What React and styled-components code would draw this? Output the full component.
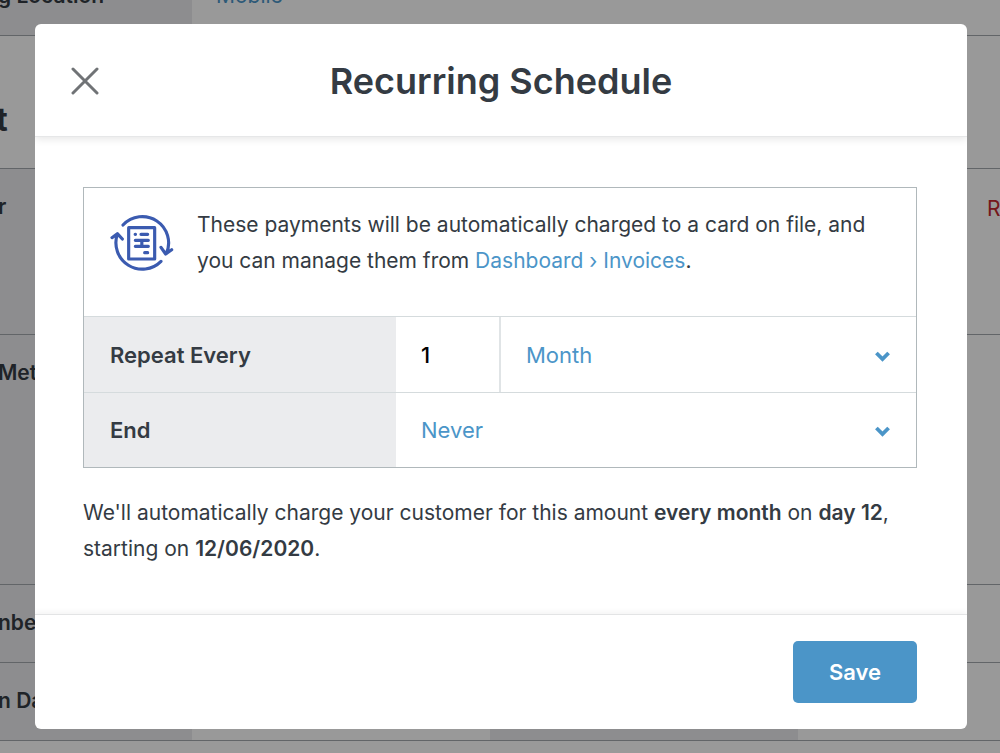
import React from 'react';
import styled, { createGlobalStyle } from 'styled-components';

const GlobalStyle = createGlobalStyle`
* { box-sizing: border-box; }
body {
    margin: 0;
    overflow: hidden;
    background: #fff;
    color: #343b43;
    font-family: Inter, "Liberation Sans", sans-serif;
    font-size: 22px;
}
`;

// ---------------- transaction page under the dialog ----------------

const Page = styled.main`
height: 100vh;
overflow: hidden;
font-size: 21px;
`;

const Table = styled.div`
margin-top: -42px;
`;

const Row = styled.div`
display: flex;
height: ${p => p.$height || 78}px;
border-bottom: 1px solid #a4a9ad;
line-height: 30px;
white-space: nowrap;
`;

const RowLabel = styled.div`
flex: none;
width: ${p => p.$wide ? 308 : 192}px;
padding: 23px 0;
background: #ebecee;
font-weight: 600;
text-indent: -2px;
overflow: hidden;
`;

const RowValue = styled.div`
flex: ${p => p.$fixed ? '0 0 298px' : 1};
padding: 23px 24px;
color: #4b95c8;
`;

const RowAction = styled.div`
width: 13px;
padding: 25px 0;
color: #c3282d;
`;

const SectionTitle = styled.h2`
margin: 0;
align-self: center;
padding-top: 36px;
font-size: 32px;
font-weight: 700;
text-indent: -4px;
`;

// ---------------- dialog ----------------

const Backdrop = styled.div`
position: fixed;
inset: 0;
display: flex;
align-items: flex-start;
padding: 24px 33px 24px 35px;
background: rgba(0, 0, 0, .4);
`;

const Dialog = styled.section`
flex: 1;
overflow: hidden;
border-radius: 6px;
background: #fff;
`;

const Header = styled.header`
display: grid;
grid-template-columns: 1fr auto 1fr;
align-items: center;
height: 113px;
padding: 1px 36px 0;
border-bottom: 1px solid #e6e7e8;
box-shadow: 0 2px 8px rgba(0, 0, 0, .1);
`;

const Title = styled.h1`
margin: 0;
font-size: 36px;
line-height: 44px;
font-weight: 600;
`;

const CloseButton = styled.button`
justify-self: start;
display: flex;
padding: 0;
border: 0;
background: none;
cursor: pointer;
`;

const Body = styled.div`
padding: 50px 50px 47px 48px;
`;

const Panel = styled.div`
border: 1px solid #b0b8bb;
`;

const Info = styled.div`
display: flex;
gap: 23px;
padding: 19px 26px 37px;
svg {
    flex: none;
    margin-top: 6px;
}
`;

const Text = styled.p`
margin: 0;
font-size: 21px;
line-height: 36px;
`;

const Summary = styled(Text)`
margin-top: 27px;
`;

const Strong = styled.strong`
font-weight: 600;
`;

const Link = styled.a`
color: #4b95c8;
text-decoration: none;
`;

const Field = styled.div`
display: flex;
height: ${p => p.$tall ? 76 : 75}px;
border-top: 1px solid #d5dbdd;
`;

const FieldLabel = styled.label`
flex: none;
display: flex;
align-items: center;
width: 312px;
padding-left: 26px;
background: #ebecee;
font-weight: 600;
`;

const Quantity = styled.input`
flex: none;
width: 105px;
padding: 0 25px;
border: 0;
border-right: 2px solid #e0e4e6;
border-radius: 0;
background: none;
color: #000;
font: inherit;
font-weight: 500;
outline: none;
`;

const SelectWrap = styled.div`
flex: 1;
display: grid;
align-items: center;
> * { grid-area: 1 / 1; }
svg {
    justify-self: end;
    margin-right: 26px;
    margin-top: 3px;
    pointer-events: none;
}
`;

const Select = styled.select`
appearance: none;
width: 100%;
height: 100%;
padding: 0 60px 0 25px;
border: 0;
background: none;
color: #4b95c8;
font: inherit;
outline: none;
cursor: pointer;
`;

const Footer = styled.footer`
display: flex;
justify-content: flex-end;
padding: 26px 50px;
border-top: 1px solid #e3e4e5;
box-shadow: 0 -2px 6px rgba(0, 0, 0, .05);
`;

const SaveButton = styled.button`
width: 124px;
height: 62px;
border: 0;
border-radius: 5px;
background: #4b95c8;
color: #fff;
font: inherit;
font-weight: 600;
cursor: pointer;
`;

const CloseIcon = () => (
    <svg width="28" height="28" viewBox="0 0 28 28" fill="none" stroke="#707376" strokeWidth="3" strokeLinecap="round">
        <path d="M2 2l24 24M26 2L2 26" />
    </svg>
);

const ChevronIcon = () => (
    <svg width="15" height="11" viewBox="0 0 15 11" fill="none" stroke="#4b95c8" strokeWidth="3.8">
        <path d="M1.4 2l6.1 6.1L13.6 2" />
    </svg>
);

const RecurringIcon = () => (
    <svg width="64" height="60" viewBox="60 54 192 180" fill="none" stroke="#3b5bb0" strokeWidth="9.5"
        strokeLinecap="round" strokeLinejoin="round">
        <path d="M99 90a79 79 0 0 1 130 86M213 157l14 20 18-13" />
        <path d="M213 199A79 79 0 0 1 82 118M66 128l16-12 15 16" />
        <path d="M116 98h78v94h-78z" />
        <path d="M135.5 118h1M153 118h20M136 136h39M155.5 136v18M136 154h39M164 173h9" />
    </svg>
);

class RecurringSchedule extends React.Component {
    constructor() {
        super();
        this.state = {
            count: '1',
            unit: 'Month',
            end: 'Never'
        }
    }

    render() {
        return (
            <Dialog role="dialog" aria-labelledby="title">
                <Header>
                    <CloseButton aria-label="Close"><CloseIcon /></CloseButton>
                    <Title id="title">Recurring Schedule</Title>
                </Header>
                <Body>
                    <Panel>
                        <Info>
                            <RecurringIcon />
                            <Text>
                                These payments will be automatically charged to a card on file, and
                                you can manage them from <Link href="#">Dashboard › Invoices</Link>.
                            </Text>
                        </Info>
                        <Field $tall>
                            <FieldLabel htmlFor="count">Repeat Every</FieldLabel>
                            <Quantity id="count" value={this.state.count}
                                onChange={(e) => this.setState({ count: e.target.value })} />
                            <SelectWrap>
                                <Select aria-label="Repeat unit" value={this.state.unit}
                                    onChange={(e) => this.setState({ unit: e.target.value })}>
                                    <option>Day</option>
                                    <option>Week</option>
                                    <option>Month</option>
                                    <option>Year</option>
                                </Select>
                                <ChevronIcon />
                            </SelectWrap>
                        </Field>
                        <Field>
                            <FieldLabel htmlFor="end">End</FieldLabel>
                            <SelectWrap>
                                <Select id="end" value={this.state.end}
                                    onChange={(e) => this.setState({ end: e.target.value })}>
                                    <option>Never</option>
                                    <option>On date</option>
                                </Select>
                                <ChevronIcon />
                            </SelectWrap>
                        </Field>
                    </Panel>
                    <Summary>
                        We'll automatically charge your customer for this amount <Strong>every month</Strong> on <Strong>day 12</Strong>,
                        starting on <Strong>12/06/2020</Strong>.
                    </Summary>
                </Body>
                <Footer>
                    <SaveButton>Save</SaveButton>
                </Footer>
            </Dialog>
        )
    }
}

const App = () => (
    <>
        <GlobalStyle />
        <Page>
            <Table>
                <Row>
                    <RowLabel>g Location</RowLabel>
                    <RowValue>Mobile</RowValue>
                </Row>
                <Row $height={133}><SectionTitle>t</SectionTitle></Row>
                <Row $height={166}>
                    <RowLabel>r</RowLabel>
                    <RowValue />
                    <RowAction>R</RowAction>
                </Row>
                <Row $height={250}>
                    <RowLabel>Met</RowLabel>
                </Row>
                <Row>
                    <RowLabel>nbe</RowLabel>
                </Row>
                <Row>
                    <RowLabel>n Da</RowLabel>
                    <RowValue $fixed />
                    <RowLabel $wide />
                    <RowValue />
                </Row>
            </Table>
        </Page>
        <Backdrop>
            <RecurringSchedule />
        </Backdrop>
    </>
);

export default App;
